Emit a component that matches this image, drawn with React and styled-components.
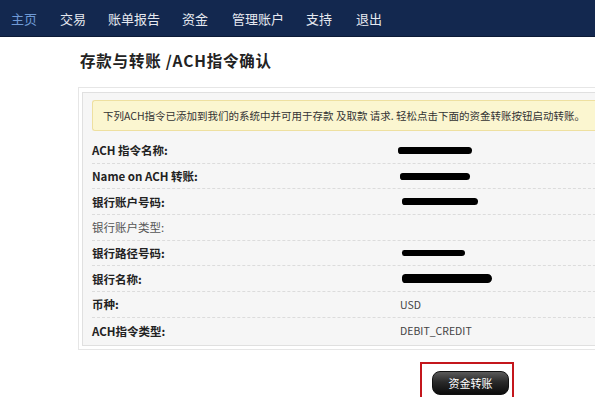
import React from "react";
import styled, { createGlobalStyle } from "styled-components";

const Global = createGlobalStyle`
  html, body { margin: 0; padding: 0; background: #fff; overflow: hidden; }
  body { font-family: "Liberation Sans", "Noto Sans CJK SC", sans-serif; width: 595px; height: 397px; }
`;

const Nav = styled.nav`
  display: flex;
  align-items: center;
  height: 37px;
  background: #13284f;
  border-bottom: 1px solid #0c1a36;
  box-sizing: border-box;
  padding-left: 11px;
`;

const NavItem = styled.a`
  font-family: "Noto Sans CJK SC", sans-serif;
  font-size: 13px;
  color: ${(p) => (p.$active ? "#6f9ad6" : "#e6e9f0")};
  text-decoration: none;
  margin-right: ${(p) => p.$gap}px;
  white-space: nowrap;
`;

const Main = styled.main`
  padding-left: 80px;
`;

const Title = styled.h1`
  margin: 12px 0 0 0;
  height: 38px;
  font-family: "Noto Sans CJK SC", sans-serif;
  font-size: 15.5px;
  font-weight: 700;
  color: #222;
  line-height: 22px;
  letter-spacing: 0.8px;
`;

const Outer = styled.div`
  margin-left: -2px;
  width: 540px;
  border: 1px solid #e6e6e6;
  padding: 4px 3px 3px 3px;
  background: #fff;
`;

const Inner = styled.div`
  background: #f6f6f6;
  border: 1px solid #e0e0e0;
  padding: 7px 0 1px 9px;
`;

const Notice = styled.div`
  height: 31px;
  box-sizing: border-box;
  display: flex;
  align-items: center;
  padding-left: 10px;
  background: #fbf6d0;
  border: 1px solid #eee0a0;
  border-right: none;
  border-radius: 3px 0 0 3px;
  font-family: "Noto Sans CJK SC", sans-serif;
  font-size: 10.5px;
  color: #333;
  white-space: nowrap;
  margin-bottom: 7px;
`;

const Row = styled.div`
  display: grid;
  grid-template-columns: 308px 1fr;
  align-items: center;
  height: 25.7px;
  border-bottom: ${(p) => (p.$last ? "none" : "1px dashed #dcdcdc")};
  box-sizing: border-box;
`;

const Label = styled.div`
  font-family: "Noto Sans CJK SC", sans-serif;
  font-size: 11.5px;
  font-weight: ${(p) => (p.$plain ? 400 : 700)};
  color: ${(p) => (p.$plain ? "#555" : "#222")};
  white-space: nowrap;
`;

const Value = styled.div`
  font-family: "Noto Sans CJK SC", sans-serif;
  font-size: 10.5px;
  color: #444;
  display: flex;
  align-items: center;
`;

const Redact = styled.span`
  display: inline-block;
  height: ${(p) => p.$h || 7}px;
  width: ${(p) => p.$w}px;
  margin-left: ${(p) => p.$x || 0}px;
  background: #000;
  border-radius: 4px 5px 5px 4px;
`;

const Actions = styled.div`
  display: flex;
  padding-left: 340px;
  margin-top: 12px;
`;

const Highlight = styled.div`
  width: 94px;
  height: 40px;
  box-sizing: border-box;
  border: 2px solid #c4161c;
  padding: 7px 0 0 10px;
`;

const Button = styled.button`
  width: 77px;
  height: 24px;
  border-radius: 8px;
  border: 1px solid #111;
  background: linear-gradient(#5a5a5a 0%, #2a2a2a 45%, #0c0c0c 100%);
  color: #fff;
  font-family: "Noto Sans CJK SC", sans-serif;
  font-size: 11px;
  padding: 0;
  cursor: pointer;
`;

const rows = [
  { label: "ACH 指令名称:", redact: { w: 74, x: -2 } },
  { label: "Name on ACH 转账:", redact: { w: 70, x: 0 } },
  { label: "银行账户号码:", redact: { w: 76, x: 2 } },
  { label: "银行账户类型:", plain: true },
  { label: "银行路径号码:", redact: { w: 63, x: 2, h: 6 } },
  { label: "银行名称:", redact: { w: 90, x: 2, h: 9 } },
  { label: "币种:", value: "USD" },
  { label: "ACH指令类型:", value: "DEBIT_CREDIT" },
];

const navItems = [
  { t: "主页", gap: 23, active: true },
  { t: "交易", gap: 22 },
  { t: "账单报告", gap: 22 },
  { t: "资金", gap: 24 },
  { t: "管理账户", gap: 22 },
  { t: "支持", gap: 24 },
  { t: "退出", gap: 0 },
];

export default function App() {
  return (
    <>
      <Global />
      <Nav>
        {navItems.map((n) => (
          <NavItem key={n.t} $active={n.active} $gap={n.gap}>
            {n.t}
          </NavItem>
        ))}
      </Nav>
      <Main>
        <Title>存款与转账 /ACH指令确认</Title>
        <Outer>
          <Inner>
            <Notice>
              下列ACH指令已添加到我们的系统中并可用于存款 及取款 请求. 轻松点击下面的资金转账按钮启动转账。
            </Notice>
            {rows.map((r, i) => (
              <Row key={r.label} $last={i === rows.length - 1}>
                <Label $plain={r.plain}>{r.label}</Label>
                <Value>
                  {r.redact ? (
                    <Redact $w={r.redact.w} $x={r.redact.x} $h={r.redact.h} />
                  ) : (
                    r.value
                  )}
                </Value>
              </Row>
            ))}
          </Inner>
        </Outer>
        <Actions>
          <Highlight>
            <Button>资金转账</Button>
          </Highlight>
        </Actions>
      </Main>
    </>
  );
}
